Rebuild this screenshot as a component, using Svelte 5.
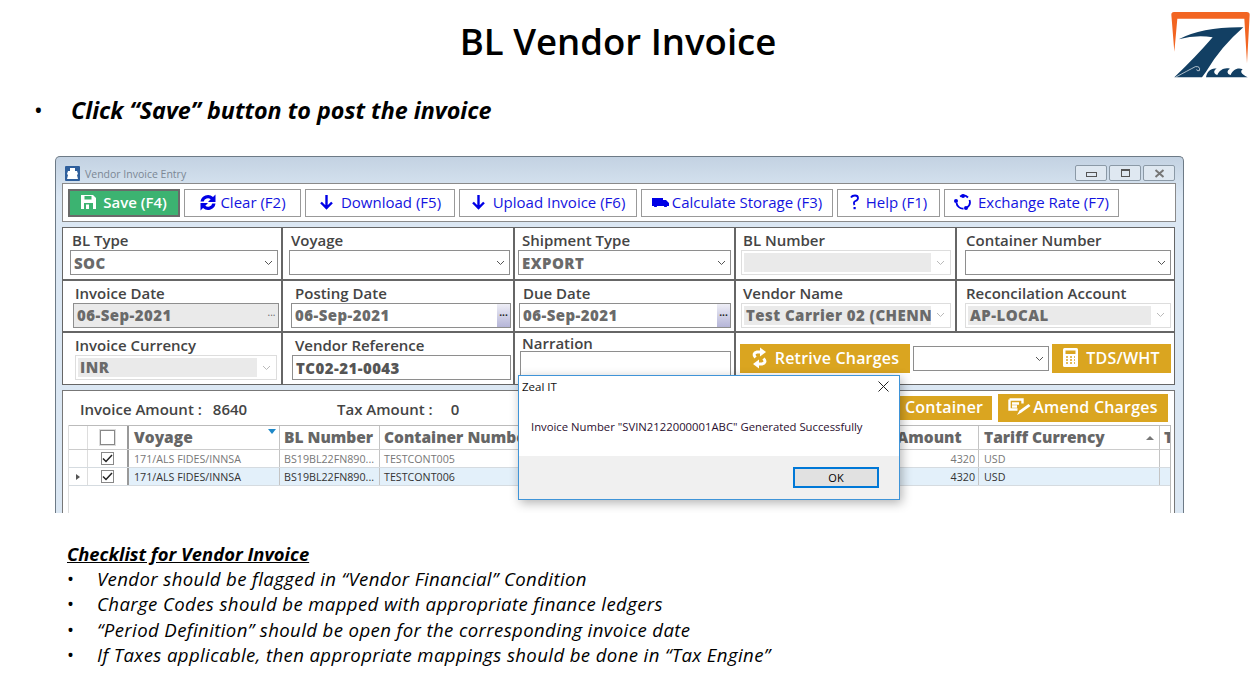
<script lang="ts">
	const checklist = [
		'Vendor should be flagged in “Vendor Financial” Condition',
		'Charge Codes should be mapped with appropriate finance ledgers',
		'“Period Definition” should be open for the corresponding invoice date',
		'If Taxes applicable, then appropriate mappings should be done in “Tax Engine”'
	];
	const rows = [
		{ voyage: '171/ALS FIDES/INNSA', bl: 'BS19BL22FN890...', cont: 'TESTCONT005', amount: '4320', cur: 'USD', active: false },
		{ voyage: '171/ALS FIDES/INNSA', bl: 'BS19BL22FN890...', cont: 'TESTCONT006', amount: '4320', cur: 'USD', active: true }
	];
</script>

{#snippet chevron()}
	<svg class="chev" width="9" height="6" viewBox="0 0 9 6"><path d="M1 1l3.5 3.5L8 1" fill="none" stroke="#555" stroke-width="1"/></svg>
{/snippet}

<div class="slide">
	<svg class="logo" width="100" height="90" viewBox="0 0 300 270">
		<path d="M46 44Q46 36 54 36L272 36Q281 36 281 44L273 190L265 56L64 56L55 155Z" fill="#f26522"/>
		<path d="M68 118Q140 80 262 82Q195 140 150 215L138 232L55 232Q120 170 170 112Q120 104 68 118Z" fill="#123f63"/>
		<path d="M150 232C153 215 165 203 182 206C172 210 172 222 184 225C190 210 205 201 222 206C212 211 212 222 224 225C230 210 245 201 260 208C252 213 254 222 275 232Z" fill="#123f63"/>
		<path d="M58 232Q95 212 118 200Q134 198 130 212Q122 214 122 208" fill="none" stroke="#fff" stroke-width="2"/>
	</svg>

	<h1>BL Vendor Invoice</h1>
	<p class="lead"><span class="dot">•</span><span>Click “Save” button to post the invoice</span></p>

	<div class="window">
		<div class="titlebar">
			<svg width="15" height="15" viewBox="0 0 15 15"><rect width="15" height="15" rx="1" fill="#2f5f9c"/><path d="M5 2h5v3h2l1 3-1 1 1 4H2l1-4-1-1 1-3h2z" fill="#fff"/></svg>
			<span class="wintitle">Vendor Invoice Entry</span>
			<div class="winbtns">
				<span class="winbtn"><i class="min"></i></span>
				<span class="winbtn"><i class="max"></i></span>
				<span class="winbtn">
					<svg width="11" height="9" viewBox="0 0 11 9"><path d="M1.5 1l8 7M9.5 1l-8 7" stroke="#777" stroke-width="2"/></svg>
				</span>
			</div>
		</div>

		<div class="toolbar">
			<button class="tool save">
				<svg width="15" height="14" viewBox="0 0 15 14"><path d="M0 0h12l3 3v11H0z" fill="#fff"/><rect x="3.500" y="1" width="7" height="3.500" fill="#3cb371"/><rect x="3" y="8" width="9" height="6" fill="#3cb371"/><rect x="5" y="9.500" width="3" height="4.500" fill="#fff"/></svg>
				Save (F4)
			</button>
			<button class="tool clear">
				<svg width="18" height="17" viewBox="0 0 18 17"><path d="M1.500 7.500A7.500 7.500 0 0 1 14 3l2.500-2.500V8H9l2.700-2.700A4.400 4.400 0 0 0 4.700 7.500zM16.500 9.500A7.500 7.500 0 0 1 4 14l-2.500 2.500V9H9l-2.700 2.700a4.400 4.400 0 0 0 7-2.200z" fill="#0000e6"/></svg>
				Clear (F2)
			</button>
			<button class="tool down">
				<svg width="15" height="16" viewBox="0 0 15 16"><path d="M7.500 1v13M2 8.500l5.500 5.500L13 8.500" fill="none" stroke="#0000e6" stroke-width="2.400"/></svg>
				Download (F5)
			</button>
			<button class="tool up">
				<svg width="15" height="16" viewBox="0 0 15 16"><path d="M7.500 1v13M2 8.500l5.500 5.500L13 8.500" fill="none" stroke="#0000e6" stroke-width="2.400"/></svg>
				Upload Invoice (F6)
			</button>
			<button class="tool calc">
				<svg width="17" height="10" viewBox="0 0 17 10"><path d="M0 1h11v2h3l3 3v3h-2a1.500 1.500 0 0 1-3 0H5a1.500 1.500 0 0 1-3 0H0z" fill="#0000e6"/></svg>
				Calculate Storage (F3)
			</button>
			<button class="tool help">
				<svg width="9" height="16" viewBox="0 0 9 16"><path d="M1 3.500Q2 1.500 5 1.500T8 4Q8 6 5.500 7T4.500 11" fill="none" stroke="#0000e6" stroke-width="1.800"/><rect x="3.500" y="13" width="2.200" height="2.200" fill="#0000e6"/></svg>
				Help (F1)
			</button>
			<button class="tool rate">
				<svg width="18" height="16" viewBox="0 0 18 16"><path d="M6 2.500A6.500 6.500 0 0 1 14 3.500M15.500 6a6.500 6.500 0 0 1-2.500 7.500M9.500 14.500A6.500 6.500 0 0 1 2.500 9" fill="none" stroke="#0000e6" stroke-width="1.800"/><circle cx="9" cy="2" r="2" fill="#0000e6"/><circle cx="2" cy="7" r="2" fill="#0000e6"/><circle cx="12" cy="14" r="2" fill="#0000e6"/></svg>
				Exchange Rate (F7)
			</button>
		</div>

		<div class="form">
			<div class="cell c1"><label>BL Type</label><div class="select"><b>SOC</b>{@render chevron()}</div></div>
			<div class="cell c2"><label>Voyage</label><div class="select">{@render chevron()}</div></div>
			<div class="cell c3"><label>Shipment Type</label><div class="select"><b>EXPORT</b>{@render chevron()}</div></div>
			<div class="cell c4"><label>BL Number</label><div class="select off"><b class="fill"></b>{@render chevron()}</div></div>
			<div class="cell c5"><label>Container Number</label><div class="select">{@render chevron()}</div></div>

			<div class="cell c1 ind"><label>Invoice Date</label><div class="date off2"><b>06-Sep-2021</b><span class="pick flat">...</span></div></div>
			<div class="cell c2 ind"><label>Posting Date</label><div class="date"><b>06-Sep-2021</b><span class="pick">...</span></div></div>
			<div class="cell c3 ind"><label>Due Date</label><div class="date"><b>06-Sep-2021</b><span class="pick">...</span></div></div>
			<div class="cell c4"><label>Vendor Name</label><div class="select off"><b class="fill">Test Carrier 02 (CHENN</b>{@render chevron()}</div></div>
			<div class="cell c5"><label>Reconcilation Account</label><div class="select off"><b class="fill">AP-LOCAL</b>{@render chevron()}</div></div>

			<div class="cell c1 ind"><label>Invoice Currency</label><div class="select off"><b class="fill">INR</b>{@render chevron()}</div></div>
			<div class="cell c2 ind"><label>Vendor Reference</label><div class="date refno"><b>TC02-21-0043</b></div></div>
			<div class="cell c3 narr"><label>Narration</label><div class="memo"></div></div>
			<div class="cell wide">
				<button class="gold retrive">
					<svg width="17" height="22" viewBox="0 0 17 22"><path d="M4.500 10.500Q1 6.500 6 5H10" fill="none" stroke="#fff" stroke-width="3"/><path d="M9 0.500l6 4.500-6 4.500z" fill="#fff"/><path d="M12.500 11.500Q16 15.500 11 17H7" fill="none" stroke="#fff" stroke-width="3"/><path d="M8 21.500l-6-4.500 6-4.500z" fill="#fff"/></svg>
					Retrive Charges
				</button>
				<div class="select extra">{@render chevron()}</div>
				<button class="gold tds">
					<svg width="15" height="19" viewBox="0 0 15 19"><rect width="15" height="19" rx="1.500" fill="#fff"/><rect x="2.500" y="2.500" width="10" height="3.500" fill="#daa520"/><path d="M3 9h2M7 9h2M11 9h1M3 12h2M7 12h2M11 12h1M3 15h2M7 15h2M11 15h1" stroke="#daa520" stroke-width="1.500"/></svg>
					TDS/WHT
				</button>
			</div>
		</div>

		<div class="lower">
			<div class="summary">
				<span class="amt inv">Invoice Amount :<em>8640</em></span>
				<span class="amt tax">Tax Amount :<em>0</em></span>
				<div class="actions">
					<button class="gold cont">Container</button>
					<button class="gold amend">
						<svg width="24" height="18" viewBox="0 0 24 18"><path d="M1.500 1.500h13v4M1.500 1.500v10h8M4 5.500h7M4 8.500h5" fill="none" stroke="#fff" stroke-width="2.400"/><path d="M9 17l2.500-4.500 9-6.500 2 2-9 6.500z" fill="#fff"/></svg>
						Amend Charges
					</button>
				</div>
			</div>
			<div class="grid">
				<div class="tr head">
					<div class="td ix"></div>
					<div class="td ck"><span class="box big"></span></div>
					<div class="td voy">Voyage<i class="funnel"></i></div>
					<div class="td bl">BL Number</div>
					<div class="td con">Container Number</div>
					<div class="td amount">Amount</div>
					<div class="td cur">Tariff Currency<i class="sort"></i></div>
					<div class="td last">T</div>
				</div>
				{#each rows as r}
					<div class="tr body" class:active={r.active}>
						<div class="td ix">{#if r.active}<i class="cursor"></i>{/if}</div>
						<div class="td ck"><span class="box"><svg width="11" height="9" viewBox="0 0 11 9"><path d="M1 4.500l3 3 6-6.500" fill="none" stroke="#222" stroke-width="1.500"/></svg></span></div>
						<div class="td voy">{r.voyage}</div>
						<div class="td bl">{r.bl}</div>
						<div class="td con">{r.cont}</div>
						<div class="td amount">{r.amount}</div>
						<div class="td cur">{r.cur}</div>
						<div class="td last"></div>
					</div>
				{/each}
			</div>
		</div>

		<div class="dialog">
			<div class="dlgtitle">
				<span>Zeal IT</span>
				<svg width="11" height="11" viewBox="0 0 11 11"><path d="M.5.500l10 10M10.500.500l-10 10" stroke="#222" stroke-width="1"/></svg>
			</div>
			<div class="dlgbody">Invoice Number "SVIN2122000001ABC" Generated Successfully</div>
			<div class="dlgfoot"><button class="ok">OK</button></div>
		</div>
	</div>

	<div class="checklist">
		<h2>Checklist for Vendor Invoice</h2>
		<ul>
			{#each checklist as item}
				<li><span class="dot2">•</span>{item}</li>
			{/each}
		</ul>
	</div>
</div>

<style>
	:global(body) {
		margin: 0;
		background: #fff;
	}

	.slide {
		position: relative;
		width: 1256px;
		height: 681px;
		overflow: hidden;
		background: #fff;
		font-family: "Open Sans", "Liberation Sans", sans-serif;
		color: #000;
	}

	.logo {
		position: absolute;
		left: 1156px;
		top: 0;
	}

	h1 {
		margin: 0;
		padding: 16px 20px 0 0;
		height: 52px;
		line-height: 50px;
		text-align: center;
		font-size: 36.6px;
		font-weight: 600;
	}

	.lead {
		display: flex;
		margin: 0;
		padding: 25px 0 0 34px;
		height: 63px;
		box-sizing: border-box;
		line-height: 34px;
		font-size: 23.3px;
		font-weight: 700;
		font-style: italic;
	}

	.dot {
		width: 37px;
		font-style: normal;
		font-weight: 400;
	}

	.window {
		position: relative;
		box-sizing: border-box;
		width: 1129px;
		height: 357px;
		margin: 25px 0 0 55px;
		padding: 0 6px;
		overflow: hidden;
		border: 1px solid #6d7a86;
		border-bottom: none;
		border-radius: 5px 5px 0 0;
		background: linear-gradient(#c3d2e2, #dbe7f3 40px);
	}

	.titlebar {
		display: flex;
		align-items: flex-end;
		gap: 5px;
		height: 26px;
		padding: 0 2px 2px 3px;
		box-sizing: border-box;
	}

	.wintitle {
		font-size: 10.5px;
		line-height: 14px;
		color: #7b8794;
	}

	.winbtns {
		display: flex;
		gap: 2px;
		margin-left: auto;
	}

	.winbtn {
		display: flex;
		align-items: center;
		justify-content: center;
		box-sizing: border-box;
		width: 32px;
		height: 16px;
		border: 1px solid #8b99a6;
		border-radius: 2px;
		background: #dfe8f1;
	}

	.min {
		width: 9px;
		height: 3px;
		margin-top: 3px;
		border: 1px solid #555;
	}

	.max {
		width: 7px;
		height: 5px;
		border: 1px solid #555;
		border-top-width: 2px;
	}

	.toolbar {
		display: flex;
		gap: 4px;
		box-sizing: border-box;
		width: 1114px;
		height: 39px;
		padding: 5px 5px;
		border: 1px solid #8a8a8a;
		background: #fff;
	}

	.tool {
		display: flex;
		align-items: center;
		justify-content: center;
		gap: 5px;
		box-sizing: border-box;
		height: 28px;
		padding: 0 0 2px;
		border: 1px solid #999;
		background: #fff;
		color: #1414e0;
		font: 15px "Open Sans", sans-serif;
		white-space: nowrap;
	}

	.save {
		width: 112px;
		gap: 7px;
		border: 2px solid #6a6a6a;
		background: #3cb371;
		color: #fff;
		font-weight: 600;
	}

	.clear { width: 117px; gap: 3px; }
	.down { width: 150px; gap: 7px; }
	.up { width: 178px; gap: 7px; }
	.calc { width: 192px; gap: 3px; }
	.help { width: 103px; gap: 7px; }
	.rate { width: 175px; gap: 6px; }

	.form {
		display: grid;
		grid-template-columns: 221px 232px 221px 221px 218px;
		grid-template-rows: 52.5px 52.5px 51px;
		width: 1113px;
		margin-top: 5px;
		border-top: 1px solid #666;
		border-bottom: 1px solid #666;
		background: #fff;
	}

	.cell {
		box-sizing: border-box;
		padding-top: 3px;
		border-right: 2px solid #666;
		border-bottom: 2px solid #666;
		font-size: 15px;
	}

	.c1 { border-left: 1px solid #666; }
	.c5 { border-right: 1px solid #666; }
	.form > .cell:nth-last-child(-n+4) { border-bottom: none; }

	label {
		display: block;
		height: 19px;
		line-height: 18px;
		font-weight: 600;
		color: #444;
		white-space: nowrap;
	}

	.c1 label { margin-left: 9px; }
	.c1 .select { margin: 0 3px 0 7px; }
	.c1.ind label { margin-left: 12px; }
	.c1.ind .date { margin: 0 2px 0 10px; }
	.c1.ind .select { margin: 0 4px 0 12px; }
	.c2 label { margin-left: 8px; }
	.c2 .select { margin: 0 3px 0 6px; }
	.c2.ind label { margin-left: 12px; }
	.c2.ind .date { margin: 0 2px 0 8px; }
	.c2.ind .refno { margin: 0 2px 0 9px; }
	.c3 label { margin-left: 7px; }
	.c3 .select { margin: 0 3px 0 3px; }
	.c3.ind label { margin-left: 8px; }
	.c3.ind .date { margin: 0 3px 0 4px; }
	.c4 label { margin-left: 7px; }
	.c4 .select { margin: 0 4px 0 5px; }
	.c5 label { margin-left: 9px; }
	.c5 .select { margin: 0 3px 0 8px; }

	.select,
	.date,
	.memo {
		display: flex;
		align-items: center;
		box-sizing: border-box;
		height: 25px;
		padding: 0 1px 0 3px;
		border: 1px solid #8e8e8e;
		background: #fff;
	}

	.select b,
	.date b {
		font-weight: 800;
		font-size: 15px;
		letter-spacing: 0.45px;
		color: #6a6a6a;
		white-space: nowrap;
	}

	.chev {
		margin: 0 3px 0 auto;
		flex: none;
	}

	.off {
		border-color: #ddd;
		padding: 2px;
	}

	.off b.fill {
		flex: 1;
		align-self: stretch;
		padding-left: 2px;
		line-height: 19px;
		overflow: hidden;
		background: #eaeaea;
	}

	.off .chev {
		margin-left: 5px;
		opacity: 0.4;
	}

	.date {
		padding: 0 0 0 3px;
	}

	.off2 {
		background: #eaeaea;
	}

	.pick {
		margin-left: auto;
		align-self: stretch;
		width: 13px;
		line-height: 17px;
		text-align: center;
		font-size: 10px;
		font-weight: 700;
		color: #222;
		background: linear-gradient(#eeeef6, #b5b5d8);
	}

	.pick.flat {
		background: none;
		font-weight: 400;
		color: #666;
	}

	.refno b {
		color: #555;
	}

	.narr label {
		height: 15px;
		line-height: 14px;
		margin-left: 7px;
	}

	.memo {
		height: 30px;
		margin: 0 3px 0 5px;
	}

	.wide {
		grid-column: 4 / 6;
		display: flex;
		align-items: flex-start;
		gap: 3px;
		padding: 11px 3px 0 4px;
		border-right: 1px solid #666;
	}

	.gold {
		display: flex;
		align-items: center;
		justify-content: center;
		flex: none;
		box-sizing: border-box;
		padding: 0 0 2px;
		border: none;
		background: #daa520;
		color: #fff;
		font: 600 16px "Open Sans", sans-serif;
		letter-spacing: 0.2px;
		white-space: nowrap;
	}

	.retrive {
		width: 170px;
		height: 29px;
		gap: 7px;
	}

	.extra {
		width: 136px;
		height: 25px;
		margin-top: 2px;
	}

	.tds {
		width: 119px;
		height: 29px;
		gap: 8px;
	}

	.lower {
		box-sizing: border-box;
		width: 1113px;
		height: 123px;
		margin-top: 5px;
		padding: 0 4px 0 5px;
		border: 1px solid #777;
		border-bottom: none;
		background: #fff;
	}

	.summary {
		display: flex;
		align-items: center;
		height: 34px;
		padding-left: 12px;
		font-size: 15px;
		font-weight: 600;
		color: #444;
	}

	.amt {
		margin-top: 1px;
		white-space: nowrap;
	}

	.amt em {
		font-style: normal;
	}

	.inv { width: 257px; }
	.inv em { margin-left: 11px; }
	.tax em { margin-left: 18px; }

	.actions {
		display: flex;
		align-items: center;
		gap: 6px;
		margin-left: auto;
		padding-right: 2px;
	}

	.cont {
		width: 110px;
		height: 24px;
		padding-left: 23px;
		justify-content: flex-start;
	}

	.amend {
		width: 170px;
		height: 28px;
		gap: 1px;
	}

	.grid {
		box-sizing: border-box;
		height: 88px;
		width: 1103px;
		overflow: hidden;
		border-left: 1px solid #ddd;
		border-right: 1px solid #bbb;
	}

	.tr {
		display: grid;
		grid-template-columns: 19px 41px 151px 100px 500px 99px 181px 93px;
	}

	.head {
		height: 25px;
		padding-bottom: 0;
		border-top: 1px solid #bbb;
		border-bottom: 1px solid #ccc;
		box-sizing: border-box;
		font-size: 15.5px;
		font-weight: 800;
		color: #666;
		white-space: nowrap;
	}

	.head .td {
		padding-bottom: 2px;
	}

	.body {
		height: 18px;
		border-bottom: 1px solid #d5dbe0;
		box-sizing: border-box;
		font-size: 10.7px;
		color: #777;
	}

	.body.active {
		background: #e3f0fa;
		color: #333;
	}

	.td {
		position: relative;
		display: flex;
		align-items: center;
		box-sizing: border-box;
		padding: 0 4px;
		border-right: 1px solid #c4c4c4;
		overflow: hidden;
		white-space: nowrap;
	}

	.ix {
		padding: 0;
		justify-content: center;
		background: #fff;
		border-right: 1px solid #ddd;
	}

	.ck {
		padding: 0;
		justify-content: center;
		background: #fff;
		border-right: 2px solid #999;
	}

	.voy { padding-left: 5px; }
	.amount { justify-content: flex-end; padding-right: 3px; }
	.head .amount { justify-content: flex-start; padding-left: 17px; }
	.cur { padding-left: 5px; }
	.last { border-right: none; }

	.box {
		display: flex;
		align-items: center;
		justify-content: center;
		box-sizing: border-box;
		width: 13px;
		height: 13px;
		border: 1px solid #888;
		background: #fff;
	}

	.box.big {
		width: 15px;
		height: 15px;
		margin-top: 2px;
		outline: 1px solid #ddd;
	}

	.funnel {
		position: absolute;
		top: 3px;
		right: 3px;
		width: 0;
		height: 0;
		border: 4px solid transparent;
		border-top: 5px solid #1e88c8;
		border-bottom: none;
	}

	.sort {
		position: absolute;
		top: 10px;
		right: 5px;
		width: 0;
		height: 0;
		border: 4px solid transparent;
		border-bottom: 4px solid #777;
		border-top: none;
	}

	.cursor {
		width: 0;
		height: 0;
		border: 3px solid transparent;
		border-left: 4px solid #555;
		border-right: none;
	}

	.dialog {
		position: absolute;
		left: 462px;
		top: 218px;
		box-sizing: border-box;
		width: 382px;
		height: 125px;
		border: 1px solid #3f94d8;
		background: #fff;
		box-shadow: 2px 3px 10px rgba(0, 0, 0, 0.3);
	}

	.dlgtitle {
		display: flex;
		align-items: center;
		justify-content: space-between;
		height: 21px;
		padding: 0 10px 0 3px;
		font-size: 11.5px;
		color: #111;
	}

	.dlgbody {
		height: 59px;
		padding: 22px 0 0 12px;
		box-sizing: border-box;
		font-size: 11.3px;
		color: #2b1030;
		white-space: nowrap;
	}

	.dlgfoot {
		display: flex;
		justify-content: flex-end;
		align-items: center;
		height: 43px;
		padding-right: 20px;
		background: #f0f0f0;
	}

	.ok {
		width: 86px;
		height: 21px;
		padding: 0;
		border: 2px solid #0078d7;
		background: #e1e1e1;
		font: 11px "Open Sans", sans-serif;
		color: #000;
	}

	.checklist {
		margin: 28px 0 0 67px;
		font-style: italic;
		font-size: 18.6px;
	}

	h2 {
		margin: 0;
		height: 25px;
		line-height: 25px;
		font-size: 18.4px;
		font-weight: 700;
		text-decoration: underline;
	}

	ul {
		margin: 0;
		padding: 0;
		list-style: none;
	}

	li {
		display: flex;
		height: 25.3px;
		line-height: 25.3px;
		letter-spacing: 0.38px;
		white-space: pre;
	}

	.dot2 {
		width: 30px;
		font-style: normal;
	}
</style>
